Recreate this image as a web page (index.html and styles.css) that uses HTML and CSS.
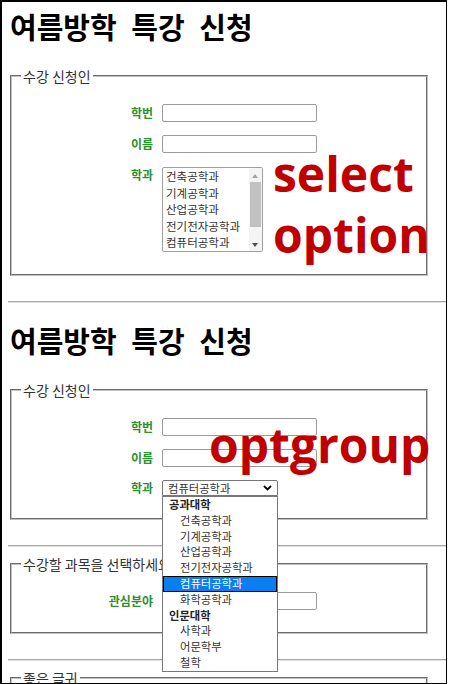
FILE: index.html
```html
<!doctype html>
<html>
	<head>
		<meta charset="utf-8">
		<title>여름방학 특강 신청</title>
		<link rel="stylesheet" href="styles.css">
	</head>
	<body>
		<div class="frame">
			<div class="sec">
				<h1>여름방학 특강 신청</h1>
				<fieldset>
					<legend>수강 신청인</legend>
					<div class="row"><label>학번</label><input type="text"></div>
					<div class="row"><label>이름</label><input type="text"></div>
					<div class="row top">
						<label>학과</label>
						<div class="listBox">
							<div class="opt">건축공학과</div>
							<div class="opt">기계공학과</div>
							<div class="opt">산업공학과</div>
							<div class="opt">전기전자공학과</div>
							<div class="opt">컴퓨터공학과</div>
							<div class="scroll">
								<span class="up"></span>
								<span class="thumb"></span>
								<span class="down"></span>
							</div>
						</div>
					</div>
				</fieldset>
			</div>
			<hr>
			<div class="sec">
				<h1>여름방학 특강 신청</h1>
				<fieldset>
					<legend>수강 신청인</legend>
					<div class="row"><label>학번</label><input type="text"></div>
					<div class="row"><label>이름</label><input type="text"></div>
					<div class="row">
						<label>학과</label>
						<div class="dropBox">
							<div class="current">
								컴퓨터공학과
								<svg class="arrow" width="9" height="6" viewBox="0 0 9 6"><polyline points="1,1 4.5,4.5 8,1" fill="none" stroke="#000" stroke-width="1.8"/></svg>
							</div>
							<div class="popup">
								<div class="group">공과대학</div>
								<div class="item">건축공학과</div>
								<div class="item">기계공학과</div>
								<div class="item">산업공학과</div>
								<div class="item">전기전자공학과</div>
								<div class="item sel">컴퓨터공학과</div>
								<div class="item">화학공학과</div>
								<div class="group">인문대학</div>
								<div class="item">사학과</div>
								<div class="item">어문학부</div>
								<div class="item">철학</div>
							</div>
						</div>
					</div>
				</fieldset>
			</div>
			<hr>
			<div class="sec plain">
				<fieldset>
					<legend>수강할 과목을 선택하세요</legend>
					<div class="row"><label>관심분야</label><input type="text"></div>
				</fieldset>
			</div>
			<hr>
			<div class="sec plain">
				<fieldset>
					<legend>좋은 글귀</legend>
					<div class="row"><label>글귀</label><input type="text"></div>
				</fieldset>
			</div>
			<p class="note note1">select<br>option</p>
			<p class="note note2">optgroup</p>
		</div>
	</body>
</html>
```

FILE: styles.css
```css
* {
	margin: 0px;
	padding: 0px;
}
body {
	font-family: "Noto Sans CJK KR", sans-serif;
	color: #222;
	background: #fff;
}
.frame {
	position: relative;
	width: 447px;
	height: 684px;
	box-sizing: border-box;
	border: 2px solid #000;
	border-right-width: 1px;
	border-bottom-width: 1px;
	padding-left: 6px;
	overflow: hidden;
}
h1 {
	margin: 20px 0 0 2px;
	font-size: 29px;
	line-height: 34px;
	letter-spacing: 0;
	word-spacing: 8px;
	color: #000;
}
.sec:first-child h1 {
	margin-top: 7px;
}
fieldset {
	width: 418px;
	box-sizing: border-box;
	margin: 24px 0 0 2px;
	padding: 0 0 22px 0;
	border: 2px groove #c0c0c0;
}
.plain fieldset {
	margin-top: 8px;
}
legend {
	margin-left: 9px;
	padding: 0 2px;
	font-size: 14px;
	line-height: 18px;
	color: #333;
}
hr {
	margin-top: 25px;
	height: 0;
	border: 0;
	border-top: 1px solid #a8a8a8;
	border-bottom: 1px solid #e2e2e2;
}

/* form rows */
.row {
	display: flex;
	align-items: center;
	margin-top: 13px;
}
.row:first-of-type {
	margin-top: 19px;
}
.row.top {
	align-items: flex-start;
	margin-top: 14px;
}
.row label {
	width: 141px;
	margin-right: 9px;
	text-align: right;
	font-size: 12px;
	line-height: 16px;
	font-weight: bold;
	color: #2d8f2d;
}
.row input {
	width: 155px;
	height: 18px;
	box-sizing: border-box;
	border: 1px solid #9a9a9a;
	border-radius: 2px;
	background: #fff;
}

/* select size=5 */
.listBox {
	position: relative;
	width: 101px;
	height: 85px;
	box-sizing: border-box;
	border: 1px solid #a0a0a0;
	border-radius: 2px;
	overflow: hidden;
}
.listBox .opt {
	padding-left: 3px;
	font-size: 11.5px;
	line-height: 16.6px;
	color: #333;
	white-space: nowrap;
}
.scroll {
	position: absolute;
	top: 0;
	right: 0;
	width: 13px;
	height: 100%;
	background: #f4f4f4;
}
.scroll span {
	position: absolute;
	display: block;
}
.scroll .up {
	top: 6px;
	left: 3px;
	border-left: 3.5px solid transparent;
	border-right: 3.5px solid transparent;
	border-bottom: 4px solid #a3a3a3;
}
.scroll .thumb {
	top: 14px;
	left: 1px;
	width: 11px;
	height: 45px;
	background: #c1c1c1;
}
.scroll .down {
	top: 75px;
	left: 3px;
	border-left: 3.5px solid transparent;
	border-right: 3.5px solid transparent;
	border-top: 4px solid #505050;
}

/* select with optgroup, opened */
.dropBox {
	position: relative;
	width: 116px;
}
.dropBox .current {
	position: relative;
	height: 16px;
	box-sizing: border-box;
	padding-left: 5px;
	border: 1px solid #767676;
	border-radius: 2px 2px 0 0;
	font-size: 11.3px;
	line-height: 14px;
	color: #333;
}
.dropBox .arrow {
	position: absolute;
	right: 5px;
	top: 4px;
}
.popup {
	position: absolute;
	z-index: 5;
	top: 16px;
	left: 0;
	width: 116px;
	box-sizing: border-box;
	border: 1px solid #767676;
	background: #fff;
}
.popup div {
	height: 15.8px;
	font-size: 11.3px;
	line-height: 15.8px;
	white-space: nowrap;
	color: #333;
}
.popup .group {
	padding-left: 6px;
	font-weight: bold;
	color: #222;
}
.popup .item {
	padding-left: 17px;
}
.popup .sel {
	background: #0a7ef0;
	color: #fff;
	box-shadow: inset 0 0 0 1px #000;
}

/* red notes over the page */
.note {
	position: absolute;
	z-index: 6;
	font-family: "Open Sans", sans-serif;
	font-weight: bold;
	font-size: 48px;
	line-height: 61px;
	color: #c00000;
}
.note1 {
	left: 271px;
	top: 141px;
}
.note2 {
	left: 207px;
	top: 412px;
}
```
